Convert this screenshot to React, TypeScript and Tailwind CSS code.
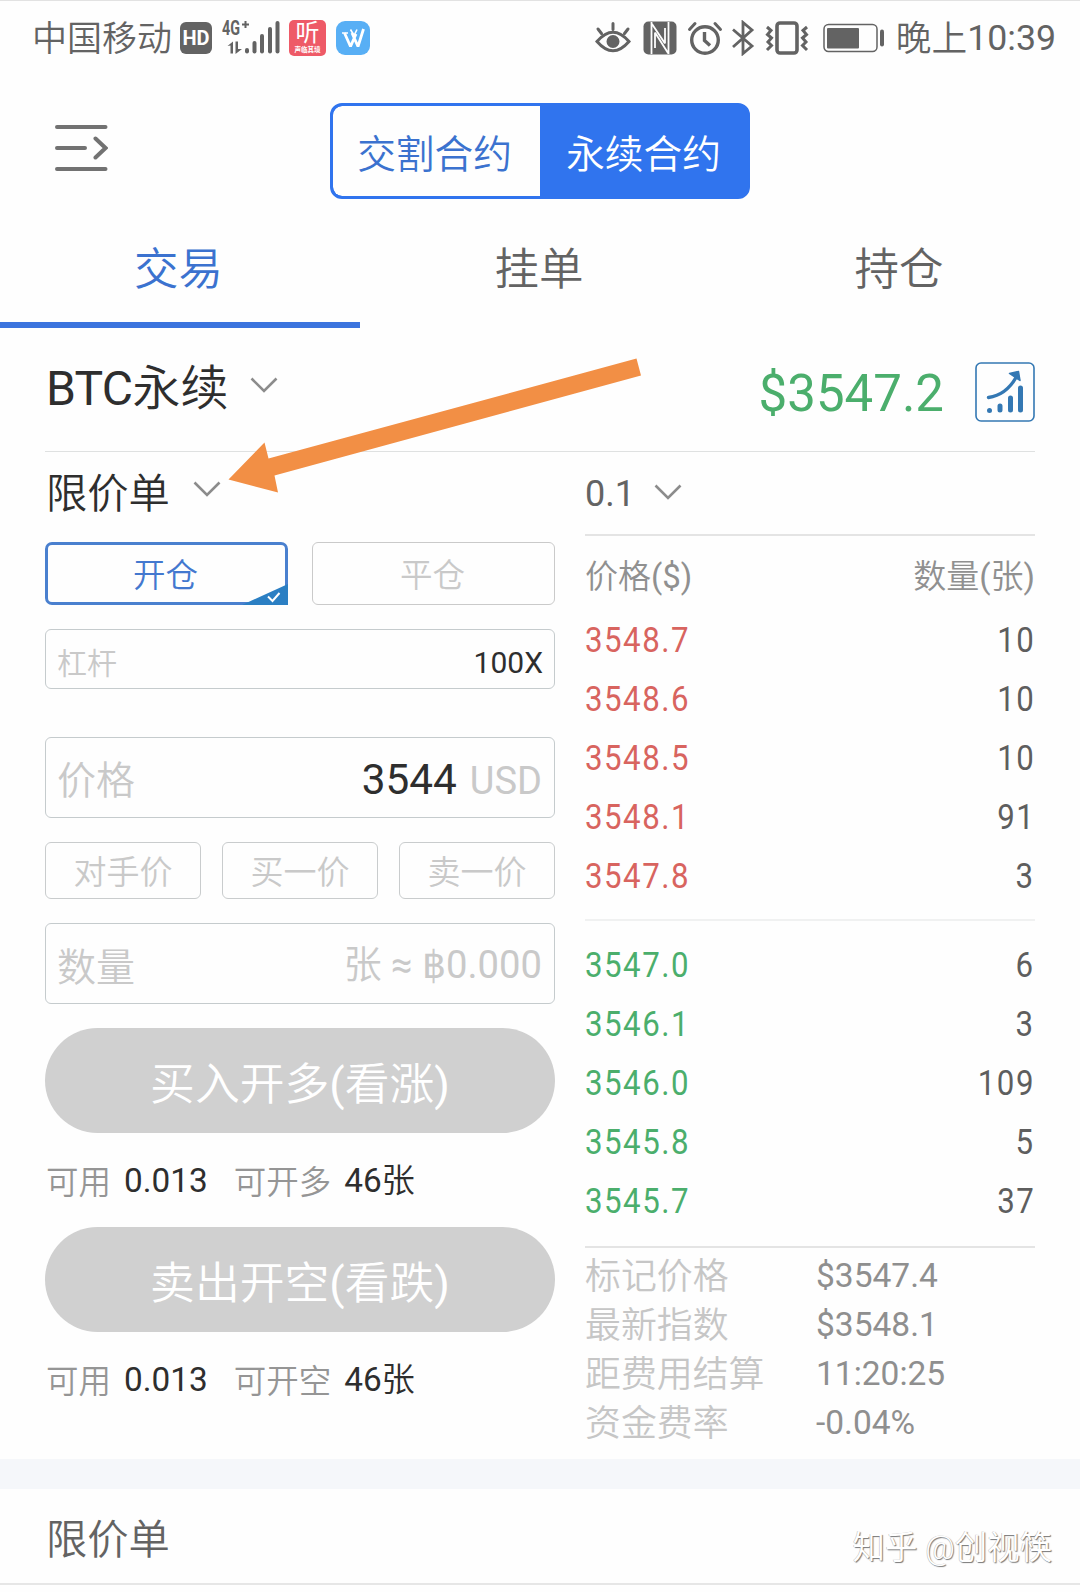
import type { ReactNode } from "react";

const asks = [
  ["3548.7", "10"],
  ["3548.6", "10"],
  ["3548.5", "10"],
  ["3548.1", "91"],
  ["3547.8", "3"],
];

const bids = [
  ["3547.0", "6"],
  ["3546.1", "3"],
  ["3546.0", "109"],
  ["3545.8", "5"],
  ["3545.7", "37"],
];

const stats = [
  ["标记价格", "$3547.4"],
  ["最新指数", "$3548.1"],
  ["距费用结算", "11:20:25"],
  ["资金费率", "-0.04%"],
];

function Chevron({ className }: { className: string }) {
  return (
    <svg viewBox="0 0 28 16" className={`h-4 w-7 shrink-0 ${className}`} fill="none" stroke="#8c8c8c" strokeWidth="2.6">
      <path d="M1.500 1.500 14 14 26.500 1.500" />
    </svg>
  );
}

function StatusBar() {
  return (
    <header className="flex h-[75px] items-center border-t border-[#e2e2e2] pr-6 pl-8 text-[#636363]">
      <span className="pt-1 text-[35px] leading-[70px] font-[350]">中国移动</span>
      <span className="ml-2 flex h-8 w-8 items-center justify-center rounded-md bg-[#636363] text-[20px] font-bold text-white">HD</span>
      <svg viewBox="0 0 60 36" className="ml-2.5 h-9 w-[60px] overflow-visible" fill="#636363">
        <text x="0" y="14.500" fontFamily="Roboto" fontSize="20" fontWeight="700" textLength="18" lengthAdjust="spacingAndGlyphs">4G</text>
        <path d="M23.500 1v7M20 4.500h7" stroke="#636363" strokeWidth="2" />
        <path d="M5.500 26 11 21.500v12H8.500v-8zM13.500 21.500h2.500v7.500h4L13.500 34z" />
        <rect x="23" y="28" width="4" height="5.500" rx="2" />
        <rect x="30.500" y="21" width="4" height="12.500" rx="2" />
        <rect x="38" y="14" width="4" height="19.500" rx="2" />
        <rect x="46" y="7" width="4" height="26.500" rx="2" />
        <rect x="53.500" y="1" width="4" height="32.500" rx="2" />
      </svg>
      <span className="ml-[7px] flex h-9 w-[37px] flex-col items-center rounded-[5px] bg-[#ee5a67] text-white">
        <span className="h-[26px] text-[24px] leading-[27px]">听</span>
        <span className="h-2 text-[6.500px] leading-[8px] font-bold">声临其境</span>
      </span>
      <svg viewBox="0 0 34 34" className="ml-[10px] h-[34px] w-[34px]">
        <rect width="34" height="34" rx="9" fill="#58aff5" />
        <path d="m8.500 12 6 13.500L20 13M16 12l6 13.500L27.500 8" fill="none" stroke="#fff" strokeWidth="2.800" strokeLinejoin="bevel" />
        <path d="M6 12h6M14.500 8.500l3.500 6L21 8.500" fill="none" stroke="#fff" strokeWidth="1.600" />
      </svg>
      <div className="ml-auto flex items-center">
        <svg viewBox="0 0 36 34" className="h-[34px] w-9" fill="none" stroke="#636363" strokeWidth="3" strokeLinecap="round">
          <path d="M2 20.500Q18 2 34 20.500 18 39 2 20.500ZM18 2.500v6M3 8l3.500 4.500M33 8l-3.500 4.500" />
          <circle cx="18" cy="20.500" r="5.500" fill="#636363" strokeWidth="2" />
        </svg>
        <svg viewBox="0 0 34 34" className="ml-3 h-[34px] w-[34px]" fill="#636363">
          <rect x="0.500" y="0.500" width="33" height="33" rx="5" />
          <path d="M8.500 1v32M25.500 1v32M9 3l13 19.500M12 11.500l13 20.500M12 11.500V27M22 7v15.500" fill="none" stroke="#fefefe" strokeWidth="1.800" />
        </svg>
        <svg viewBox="0 0 36 36" className="ml-[10px] h-9 w-9" fill="none" stroke="#636363" strokeWidth="3.400">
          <circle cx="18" cy="20" r="13.300" />
          <path d="M17.500 12v8.500l5.500 5" />
          <path d="M2.500 9.500 8 3.500M33.500 9.500 28 3.500" strokeWidth="3" strokeLinecap="round" />
        </svg>
        <svg viewBox="0 0 24 36" className="ml-2 h-9 w-6" fill="none" stroke="#636363" strokeWidth="2.800">
          <path d="M2 9.500 21 26l-9 7.500V2.500L21 10 2 27" />
        </svg>
        <svg viewBox="0 0 44 36" className="ml-[10px] h-9 w-11" fill="none" stroke="#636363">
          <rect x="12" y="3" width="20" height="30" rx="3" strokeWidth="3.600" />
          <path d="M2 7l4 3.500-3.500 4L6.500 18 3 22l3.500 3.500L2 30M42 7l-4 3.500 3.500 4L37.500 18l3.500 4-3.500 3.500L42 30" strokeWidth="3" />
        </svg>
        <svg viewBox="0 0 62 30" className="ml-[14px] h-[30px] w-[62px]" fill="#636363">
          <rect x="1" y="1.500" width="53" height="27" rx="4.500" fill="none" stroke="#636363" strokeWidth="1.500" />
          <rect x="4" y="5" width="32" height="20.500" rx="1" />
          <rect x="57" y="6.500" width="4" height="17" rx="2" />
        </svg>
        <span className="ml-[11px] flex items-center text-[35.700px] leading-none"><span className="pt-1 font-[350]">晚上</span><span className="pt-0.5">10:39</span></span>
      </div>
    </header>
  );
}

function Pill({ children }: { children: ReactNode }) {
  return (
    <button className="flex h-[105px] items-center justify-center rounded-full bg-[#d0d0d0] pt-2.5 text-[44.800px] leading-none font-[350] text-white">
      {children}
    </button>
  );
}

function Paren({ children }: { children: ReactNode }) {
  return (
    <>
      <span className="font-normal">(</span>
      {children}
      <span className="font-normal">)</span>
    </>
  );
}

function Available({ kind }: { kind: string }) {
  return (
    <div className="flex h-[94px] items-center pt-0.5 pl-px text-[33.300px] leading-none text-[#2e2e2e]">
      <span className="pt-1 text-[32.500px] font-[350] text-[#959595]">可用</span>
      <span className="ml-[13px]">0.013</span>
      <span className="ml-[26px] pt-1 text-[32.500px] font-[350] text-[#959595]">{kind}</span>
      <span className="ml-[13px]">46<span className="font-[350]">张</span></span>
    </div>
  );
}

function OrderForm() {
  return (
    <section className="flex w-[510px] flex-col text-[#c9c9c9]">
      <div className="flex h-[90px] items-center pb-1 pl-px text-[41.300px] leading-none font-[350] text-[#2e2e2e]">
        限价单
        <Chevron className="mb-3 ml-[23px]" />
      </div>
      <div className="flex gap-6 text-[32.500px] leading-none font-[350]">
        <button className="relative flex h-[63px] w-[243px] items-center justify-center rounded-[7px] rounded-br-none border-3 border-[#4a80cf] pt-1.5 pr-0.5 text-[#4378cf]">
          开仓
          <svg viewBox="0 0 46 21" className="absolute -right-[3px] -bottom-[3px] h-[21px] w-[46px]">
            <path d="M0 21 46 0v21Z" fill="#2b7fc3" />
            <path d="m26 12.500 4.500 4.500 7-8" fill="none" stroke="#fff" strokeWidth="2" />
          </svg>
        </button>
        <button className="flex h-[63px] w-[243px] items-center justify-center rounded-md border border-[#cacaca] pt-1.5 pr-0.5">平仓</button>
      </div>
      <div className="mt-6 flex h-[60px] items-center justify-between rounded-md border border-[#c5cbcd] pt-2 pr-[11px] pl-[11px] leading-none">
        <span className="pt-0.5 text-[30px] font-[350]">杠杆</span>
        <span className="text-[30px] text-[#2e2e2e]">100X</span>
      </div>
      <div className="mt-12 flex h-[81px] items-center rounded-md border border-[#c5cbcd] pt-1.5 pr-3 pl-[11px] leading-none">
        <span className="pt-0.5 text-[39px] font-[350]">价格</span>
        <span className="ml-auto text-[42.300px] text-[#2e2e2e]">3544</span>
        <span className="ml-[13px] text-[38px]">USD</span>
      </div>
      <div className="mt-6 flex gap-[21px] text-[33px] leading-none font-[350]">
        {["对手价", "买一价", "卖一价"].map((label) => (
          <button key={label} className="flex h-[57px] flex-1 items-center justify-center rounded-md border border-[#c9cccd] pt-1">
            {label}
          </button>
        ))}
      </div>
      <div className="mt-6 mb-6 flex h-[81px] items-center justify-between rounded-md border border-[#c5cbcd] pt-1 pr-3 pl-[11px] text-[38.200px] leading-none">
        <span className="pt-1.5 text-[39px] font-[350]">数量</span>
        <span><span className="font-[350]">张</span> ≈ ฿0.000</span>
      </div>
      <Pill>买入开多<Paren>看涨</Paren></Pill>
      <Available kind="可开多" />
      <Pill>卖出开空<Paren>看跌</Paren></Pill>
      <Available kind="可开空" />
    </section>
  );
}

function Book({ rows, className }: { rows: string[][]; className: string }) {
  return (
    <div>
      {rows.map(([price, amount]) => (
        <div key={price} className="flex h-[59px] items-center justify-between pt-px text-[35.500px] leading-none tracking-[1.700px]">
          <span className={`origin-left scale-x-[0.88] ${className}`}>{price}</span>
          <span className="origin-right scale-x-[0.88] text-[#5e5e5e]">{amount}</span>
        </div>
      ))}
    </div>
  );
}

function OrderBook() {
  return (
    <section className="w-[450px]">
      <div className="flex h-[82px] items-center pt-0.5 text-[36px] leading-none text-[#636363]">
        0.1
        <Chevron className="mb-1 ml-[19px]" />
      </div>
      <div className="border-t-2 border-[#e4e4e4]" />
      <div className="flex h-[75px] items-center justify-between pt-1.5 text-[33px] leading-none font-[350] text-[#909090]">
        <span>价格<Paren><span className="font-normal">$</span></Paren></span>
        <span>数量<Paren>张</Paren></span>
      </div>
      <Book rows={asks} className="text-[#d8645f]" />
      <div className="mt-[13px] mb-[15px] border-t-2 border-[#f0f1f1]" />
      <Book rows={bids} className="text-[#4bae6c]" />
      <div className="mt-[15px] border-t-2 border-[#e4e4e4]" />
      <dl className="pt-[3px]">
        {stats.map(([label, value]) => (
          <div key={label} className="flex h-[49px] items-center leading-none">
            <dt className="w-[231px] pt-1 text-[35.900px] font-[350] text-[#c6c6c6]">{label}</dt>
            <dd className="text-[33.500px] text-[#8f8f8f]">{value}</dd>
          </div>
        ))}
      </dl>
    </section>
  );
}

export default function App() {
  return (
    <div className="relative h-[1592px] w-[1080px] overflow-hidden bg-[#fefefe] font-['Roboto','Noto_Sans_CJK_SC',sans-serif]">
      <StatusBar />
      <div className="grid h-[151px] grid-cols-[330px_420px_1fr] items-start pt-7">
        <svg viewBox="0 0 54 48" className="mt-[21px] ml-[54px] h-12 w-[54px]" fill="none" stroke="#727272" strokeWidth="4" strokeLinecap="round">
          <path d="M3 3h48.500M3 24h28M3 45h48.500M41.500 14.500 51.500 24l-10 9.500" />
        </svg>
        <div className="flex h-24 overflow-hidden rounded-xl border-3 border-[#3074ee] bg-[#3074ee] text-[38.700px] leading-none font-[350]">
          <button className="flex w-[207px] items-center justify-center rounded-l-[9px] bg-[#fefefe] pt-2 pr-1 text-[#3b72cf]">交割合约</button>
          <button className="flex w-[207px] items-center justify-center pt-2 text-white">永续合约</button>
        </div>
      </div>
      <nav className="grid h-[102px] grid-cols-3 text-[44.500px] leading-none font-[350] text-[#636363]">
        <button className="flex items-center justify-center border-b-6 border-[#3b74de] pr-[3px] pb-[8px] text-[#3b72cf]">交易</button>
        <button className="flex items-center justify-center pr-0.5 pb-[14px]">挂单</button>
        <button className="flex items-center justify-center pr-0.5 pb-[14px]">持仓</button>
      </nav>
      <main className="h-[1131px] px-[45px]">
        <div className="flex h-[124px] items-center border-b border-[#dfe1e1] leading-none">
          <h1 className="pb-[2px] pl-px text-[48px] text-[#2e2e2e]"><span className="tracking-[-0.700px]">BTC</span><span className="font-[350]">永续</span></h1>
          <Chevron className="mb-[10px] ml-[22px]" />
          <span className="ml-auto pt-[8px] text-[51px] text-[#4bae6c]">$3547.2</span>
          <svg viewBox="0 0 60 60" className="mt-[5px] ml-[31px] h-[60px] w-[60px]" fill="none" stroke="#3478b3">
            <rect x="1" y="1" width="58" height="58" rx="5" strokeWidth="1.600" />
            <path d="M13.500 35.500Q31 33 41 15.500" strokeWidth="3.400" strokeLinecap="round" />
            <path d="M34.500 11.500 43.500 9.500 45 18.500Z" fill="#3478b3" strokeWidth="1.500" strokeLinejoin="round" />
            <path d="M25 44v4M35.500 36v12M45.500 26v22" strokeWidth="5" strokeLinecap="round" />
            <circle cx="14.500" cy="48.500" r="2.500" fill="#3478b3" stroke="none" />
          </svg>
        </div>
        <div className="flex justify-between">
          <OrderForm />
          <OrderBook />
        </div>
      </main>
      <div className="h-[30px] bg-[#f5f7fa]" />
      <footer className="flex h-[96px] items-center justify-between border-b-2 border-[#e6e6e6] pr-7 pl-[46px] leading-none font-[350]">
        <span className="pt-2.5 text-[41.300px] text-[#636363]">限价单</span>
        <span className="pt-6 text-[32.400px] text-white [text-shadow:1px_1px_1px_#777,-0.500px_-0.500px_0.500px_#bbb]">知乎 @创视筷</span>
      </footer>
      <svg viewBox="0 0 416 136" className="absolute top-[358px] left-[227px] h-[136px] w-[416px]" fill="#f28f45">
        <path d="M1.500 121.500 37.500 84.500 41.500 100.500 409.500 0.500 414 17.500 47.500 117.500 51 134.500Z" />
      </svg>
    </div>
  );
}
